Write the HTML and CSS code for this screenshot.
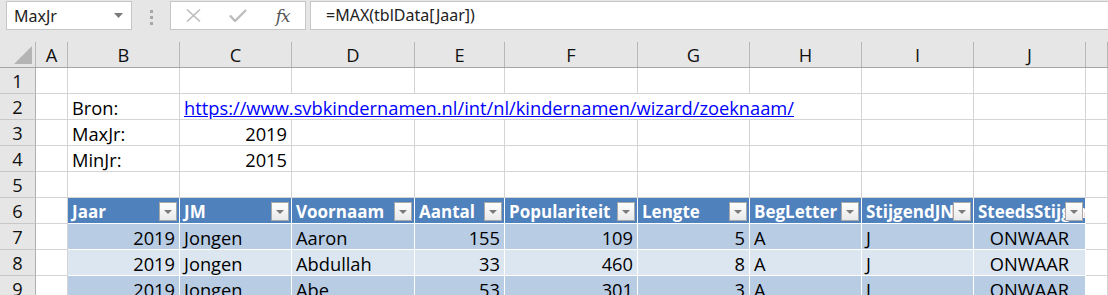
FILE: index.html
```html
<!DOCTYPE html>
<html>
<head>
    <title>tblData - Kindernamen</title>
    <link rel="stylesheet" href="styles.css">
</head>
<body>
    <div class="toolbar">
        <div class="namebox">
            <span>MaxJr</span>
            <svg class="caret" width="9" height="5" viewBox="0 0 9 5"><path d="M0 0h9L4.5 5z" fill="#7a7a7a"/></svg>
        </div>
        <div class="grip">
            <span></span><span></span><span></span>
        </div>
        <div class="fxbox">
            <div class="fxslot">
                <svg width="15" height="13" viewBox="0 0 15 13"><path d="M1 0.5l13 12M14 0.5l-13 12" stroke="#bdbdbd" stroke-width="1.6" fill="none"/></svg>
            </div>
            <div class="fxslot">
                <svg width="18" height="13" viewBox="0 0 18 13"><path d="M1 6.5l5 5.5L17 1" stroke="#bdbdbd" stroke-width="2.4" fill="none"/></svg>
            </div>
            <div class="fxslot"><span class="fx">fx</span></div>
        </div>
        <div class="formula">=MAX(tblData[Jaar])</div>
    </div>

    <div class="sheet">
        <div class="row colhead">
            <div class="corner">
                <svg width="18" height="18" viewBox="0 0 18 18"><path d="M18 0V18H0z" fill="#b4b4b4"/></svg>
            </div>
            <div class="ch">A</div><div class="ch">B</div><div class="ch">C</div><div class="ch">D</div>
            <div class="ch">E</div><div class="ch">F</div><div class="ch">G</div><div class="ch">H</div>
            <div class="ch">I</div><div class="ch">J</div><div class="ch"></div>
        </div>

        <div class="row">
            <div class="rh">1</div>
            <div class="c"></div><div class="c"></div><div class="c"></div><div class="c"></div><div class="c"></div>
            <div class="c"></div><div class="c"></div><div class="c"></div><div class="c"></div><div class="c"></div><div class="c"></div>
        </div>
        <div class="row">
            <div class="rh">2</div>
            <div class="c"></div>
            <div class="c">Bron:</div>
            <div class="c span6"><a class="link" href="#">https://www.svbkindernamen.nl/int/nl/kindernamen/wizard/zoeknaam/</a></div>
            <div class="c"></div><div class="c"></div><div class="c"></div>
        </div>
        <div class="row">
            <div class="rh">3</div>
            <div class="c"></div><div class="c">MaxJr:</div><div class="c num">2019</div>
            <div class="c"></div><div class="c"></div><div class="c"></div><div class="c"></div><div class="c"></div>
            <div class="c"></div><div class="c"></div><div class="c"></div>
        </div>
        <div class="row">
            <div class="rh">4</div>
            <div class="c"></div><div class="c">MinJr:</div><div class="c num">2015</div>
            <div class="c"></div><div class="c"></div><div class="c"></div><div class="c"></div><div class="c"></div>
            <div class="c"></div><div class="c"></div><div class="c"></div>
        </div>
        <div class="row">
            <div class="rh">5</div>
            <div class="c"></div><div class="c"></div><div class="c"></div><div class="c"></div><div class="c"></div>
            <div class="c"></div><div class="c"></div><div class="c"></div><div class="c"></div><div class="c"></div><div class="c"></div>
        </div>

        <!-- tblData -->
        <div class="row">
            <div class="rh">6</div>
            <div class="c"></div>
            <div class="c th">Jaar<span class="drop"></span></div>
            <div class="c th">JM<span class="drop"></span></div>
            <div class="c th">Voornaam<span class="drop"></span></div>
            <div class="c th">Aantal<span class="drop"></span></div>
            <div class="c th">Populariteit<span class="drop"></span></div>
            <div class="c th">Lengte<span class="drop"></span></div>
            <div class="c th">BegLetter<span class="drop"></span></div>
            <div class="c th">StijgendJN<span class="drop"></span></div>
            <div class="c th">SteedsStijgend<span class="drop"></span></div>
            <div class="c"></div>
        </div>
        <div class="row">
            <div class="rh">7</div>
            <div class="c"></div>
            <div class="c band num">2019</div>
            <div class="c band">Jongen</div>
            <div class="c band">Aaron</div>
            <div class="c band num">155</div>
            <div class="c band num">109</div>
            <div class="c band num">5</div>
            <div class="c band">A</div>
            <div class="c band">J</div>
            <div class="c band mid">ONWAAR</div>
            <div class="c"></div>
        </div>
        <div class="row">
            <div class="rh">8</div>
            <div class="c"></div>
            <div class="c band light num">2019</div>
            <div class="c band light">Jongen</div>
            <div class="c band light">Abdullah</div>
            <div class="c band light num">33</div>
            <div class="c band light num">460</div>
            <div class="c band light num">8</div>
            <div class="c band light">A</div>
            <div class="c band light">J</div>
            <div class="c band light mid">ONWAAR</div>
            <div class="c"></div>
        </div>
        <div class="row">
            <div class="rh">9</div>
            <div class="c"></div>
            <div class="c band num">2019</div>
            <div class="c band">Jongen</div>
            <div class="c band">Abe</div>
            <div class="c band num">53</div>
            <div class="c band num">301</div>
            <div class="c band num">3</div>
            <div class="c band">A</div>
            <div class="c band">J</div>
            <div class="c band mid">ONWAAR</div>
            <div class="c"></div>
        </div>
    </div>
</body>
</html>
```

FILE: styles.css
```css
* {
    margin: 0;
    padding: 0;
    box-sizing: border-box;
}

body {
    background: #fff;
    overflow: hidden;
    font-family: "Open Sans", "Noto Sans", sans-serif;
}

/* formula bar */

.toolbar {
    display: flex;
    align-items: flex-start;
    height: 42px;
    padding-top: 1px;
    background: #e6e6e6;
    font-family: "Noto Sans", "Open Sans", sans-serif;
    font-size: 16px;
    color: #222;
}

.namebox {
    display: flex;
    align-items: center;
    justify-content: space-between;
    width: 126px;
    height: 29px;
    margin-left: 6px;
    padding: 0 8px 0 7px;
    background: #fff;
    border: 1px solid #c6c6c6;
}

.grip {
    display: flex;
    flex-direction: column;
    align-items: center;
    gap: 3px;
    width: 38px;
    padding-top: 9px;
}

.grip span {
    width: 3px;
    height: 3px;
    background: #a8a8a8;
}

.fxbox {
    display: flex;
    width: 136px;
    height: 29px;
    background: #fff;
    border: 1px solid #c6c6c6;
}

.fxslot {
    flex: 1;
    display: flex;
    align-items: center;
    justify-content: center;
}

.fx {
    font-family: "DejaVu Serif", "Liberation Serif", serif;
    font-style: italic;
    font-size: 17px;
    color: #555;
    letter-spacing: -1px;
}

.formula {
    flex: 1;
    height: 29px;
    margin-left: 4px;
    padding-left: 15px;
    line-height: 27px;
    background: #fff;
    border: 1px solid #c6c6c6;
    border-right: none;
    white-space: nowrap;
}

/* grid */

.row {
    display: grid;
    grid-template-columns: 36px 32px 112px 112px 123px 90px 133px 112px 112px 112px 112px 22px;
    height: 26px;
    font-size: 18.3px;
}

.colhead {
    background: #e6e6e6;
    border-bottom: 1px solid #a6a6a6;
}

.corner {
    display: flex;
    align-items: flex-end;
    justify-content: flex-end;
    padding: 0 3px 3px 0;
    border-right: 1px solid #b7b7b7;
}

.ch {
    text-align: center;
    line-height: 25px;
    border-right: 1px solid #b7b7b7;
    color: #111;
}

.rh {
    text-align: center;
    line-height: 25px;
    background: #e6e6e6;
    border-right: 1px solid #b0b0b0;
    border-bottom: 1px solid #c8c8c8;
    color: #111;
}

.c {
    position: relative;
    height: 26px;
    padding: 1px 4px 0;
    line-height: 25px;
    white-space: nowrap;
    overflow: hidden;
    border-right: 1px solid #d4d4d4;
    border-bottom: 1px solid #d4d4d4;
    color: #000;
}

.span6 {
    grid-column: span 6;
}

.num {
    text-align: right;
}

.mid {
    text-align: center;
}

.link {
    color: #0000ff;
}

/* table style */

.th {
    background: #4f81bd;
    color: #fff;
    font-size: 17px;
    font-weight: bold;
    border-color: #fff;
}

.drop {
    position: absolute;
    right: 2px;
    top: 4px;
    width: 18px;
    height: 19px;
    border: 1px solid #a9a9a9;
    background: linear-gradient(#ffffff, #e9e9e9);
}

.drop::after {
    content: "";
    position: absolute;
    left: 4px;
    top: 7px;
    border-left: 4px solid transparent;
    border-right: 4px solid transparent;
    border-top: 4px solid #7a7a7a;
}

.band {
    background: #b8cce4;
    border-color: #fff;
}

.band.light {
    background: #dce6f1;
}
```
